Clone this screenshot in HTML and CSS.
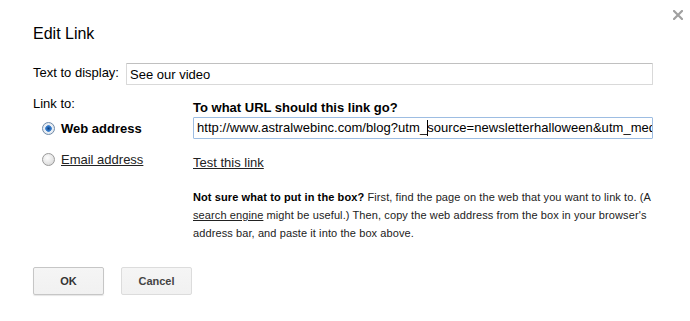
FILE: index.html
```html
<!DOCTYPE html>
<html lang="en">
<head>
  <meta charset="UTF-8" />
  <meta name="viewport" content="width=device-width, initial-scale=1.0"/>
  <title>Edit Link</title>
  <link rel="stylesheet" href="styles.css">
</head>
<body>
  <div class="dialog">
    <span class="close" title="Close">
      <svg width="10" height="10" viewBox="0 0 10 10">
        <path d="M1 1 L9 9 M9 1 L1 9" stroke="#a0a0a0" stroke-width="2.2" stroke-linecap="square"/>
      </svg>
    </span>

    <h1>Edit Link</h1>

    <div class="text-row">
      <label for="displayText">Text to display:</label>
      <input id="displayText" class="field" type="text" value="See our video">
    </div>

    <div class="link-section">
      <div class="link-types">
        <div class="link-to">Link to:</div>
        <div class="option">
          <span class="radio checked"></span>
          <span class="option-label bold">Web address</span>
        </div>
        <div class="option">
          <span class="radio"></span>
          <span class="option-label underline">Email address</span>
        </div>
      </div>

      <div class="link-target">
        <div class="question">To what URL should this link go?</div>
        <div class="field url-field">http://www.astralwebinc.com/blog?utm_<span class="caret"></span>source=newsletterhalloween&amp;utm_medium=email&amp;utm_campaign=halloween</div>
        <a class="test-link" href="#">Test this link</a>
        <p class="help">
          <b>Not sure what to put in the box?</b> First, find the page on the web that you want to link to. (A
          <a href="#">search engine</a> might be useful.) Then, copy the web address from the box in your browser's
          address bar, and paste it into the box above.
        </p>
      </div>
    </div>

    <div class="buttons">
      <button class="btn btn-ok">OK</button>
      <button class="btn">Cancel</button>
    </div>
  </div>
</body>
</html>
```

FILE: styles.css
```css
body {
  margin: 0;
  padding: 0;
  background-color: #fff;
  color: #000;
  font-family: "Liberation Sans", Arial, sans-serif;
  font-size: 13px;
}

.dialog {
  position: relative;
  width: 690px;
  height: 321px;
  box-sizing: border-box;
  padding: 24px 37px 0 33px;
  overflow: hidden;
}

.close {
  position: absolute;
  top: 10px;
  left: 673px;
  width: 10px;
  height: 10px;
  cursor: pointer;
}

.close svg {
  display: block;
}

h1 {
  margin: 0;
  font-size: 16px;
  line-height: 20px;
  font-weight: normal;
  color: #000;
}

.text-row {
  display: flex;
  align-items: center;
  margin-top: 19px;
}

.text-row label {
  width: 93px;
  flex-shrink: 0;
  line-height: 16px;
  margin-top: -2px;
}

.field {
  flex: 1;
  min-width: 0;
  box-sizing: border-box;
  height: 22px;
  margin: 0;
  padding: 0 3px;
  border: 1px solid #d9d9d9;
  border-top-color: #c0c0c0;
  border-radius: 1px;
  font-family: inherit;
  font-size: 13px;
  color: #000;
  outline: none;
}

.link-section {
  display: flex;
}

.link-types {
  width: 160px;
  flex-shrink: 0;
  margin-top: 11px;
}

.link-to {
  line-height: 16px;
}

.option {
  display: flex;
  align-items: center;
  margin-top: 9px;
  padding-left: 9px;
  line-height: 16px;
}

.option + .option {
  margin-top: 15px;
}

.radio {
  width: 11px;
  height: 11px;
  border: 1px solid #9a9a9a;
  border-radius: 50%;
  background: radial-gradient(circle at 40% 35%, #fdfdfd 0, #e6e6e6 55%, #cfcfcf 100%);
  margin-right: 6px;
  position: relative;
  top: -1px;
  flex-shrink: 0;
}

.radio.checked {
  border-color: #6f8aa8;
  background: radial-gradient(circle, #0f3f7a 0, #2a6fc0 2px, #4b8ad1 3px, #e9eef4 3.6px, #dfe5ec 100%);
}

.option-label {
  font-size: 13px;
  color: #000;
}

.bold {
  font-weight: bold;
}

.underline {
  text-decoration: underline;
  color: #222;
}

.link-target {
  flex: 1;
  min-width: 0;
  margin-top: 15px;
}

.question {
  font-weight: bold;
  line-height: 16px;
}

.url-field {
  margin-top: 1px;
  line-height: 20px;
  white-space: nowrap;
  overflow: hidden;
  border: 1px solid #9dbde2;
  padding-left: 3px;
  letter-spacing: 0.05px;
}

.caret {
  display: inline-block;
  width: 1px;
  height: 16px;
  margin-right: -1px;
  background: #000;
  vertical-align: -4px;
}

.test-link {
  display: inline-block;
  margin-top: 16px;
  line-height: 16px;
  color: #222;
  text-decoration: underline;
}

.help {
  margin: 17px 0 0;
  font-size: 11px;
  line-height: 18px;
  letter-spacing: 0.1px;
  color: #222;
}

.help b {
  color: #000;
}

.help a {
  color: #222;
  text-decoration: underline;
}

.buttons {
  display: flex;
  gap: 17px;
  margin-top: 25px;
}

.btn {
  width: 71px;
  height: 28px;
  box-sizing: border-box;
  padding: 0;
  border: 1px solid #dcdcdc;
  border-radius: 2px;
  background: linear-gradient(#f5f5f5, #f1f1f1);
  font-family: inherit;
  font-size: 11px;
  font-weight: bold;
  color: #444;
  cursor: pointer;
}

.btn-ok {
  border-color: #c6c6c6;
  box-shadow: 0 1px 1px rgba(0,0,0,0.1);
  color: #333;
}
```
